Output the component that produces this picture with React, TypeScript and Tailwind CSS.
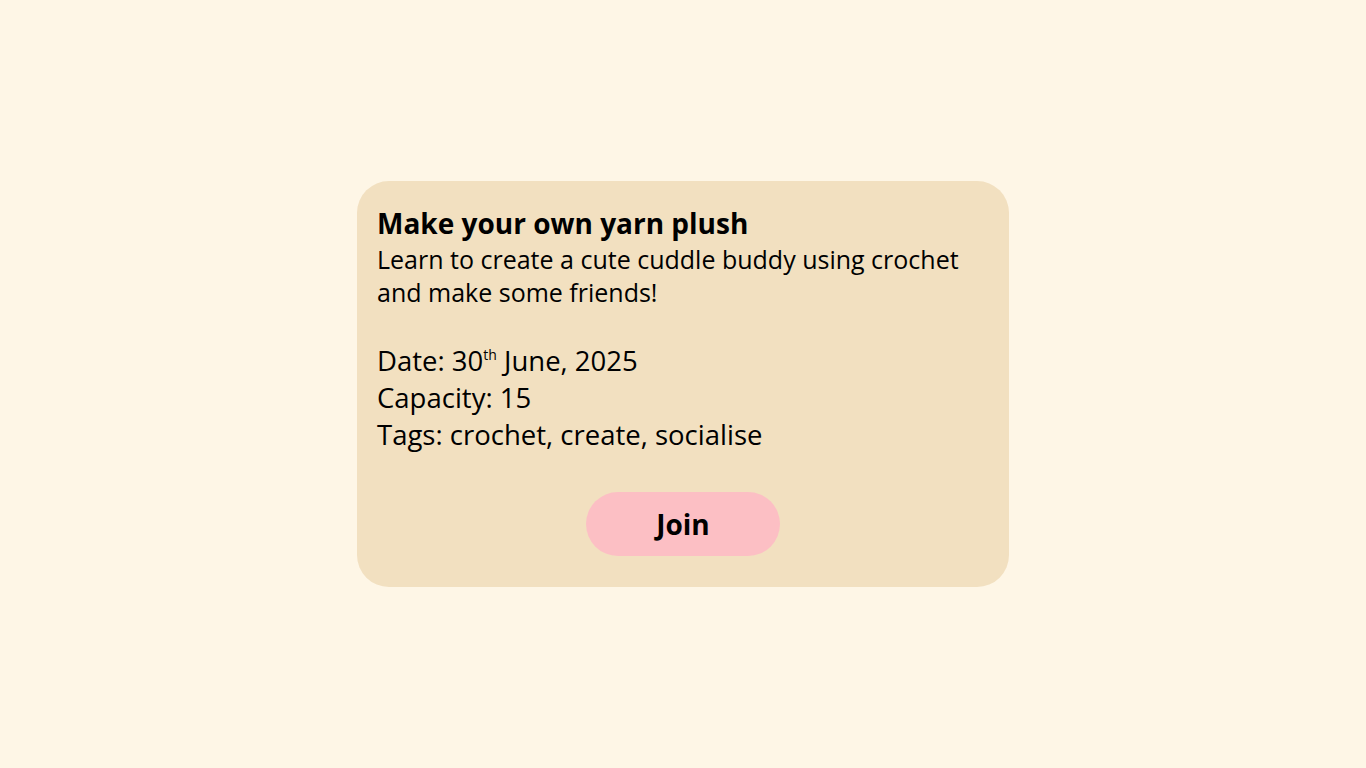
export default function App() {
  return (
    <div className="min-h-screen w-full bg-[#fef6e6] flex items-center justify-center" style={{ fontFamily: '"Open Sans", "Noto Sans", sans-serif' }}>
      <div className="w-[652px] h-[406px] bg-[#f2e0c0] rounded-[32px] px-5 pt-[24px] flex flex-col text-black">
        <h1 className="text-[28px] leading-[36px] font-bold">Make your own yarn plush</h1>
        <p className="text-[25px] leading-[33px] mt-[2px] max-w-[600px]">Learn to create a cute cuddle buddy using crochet and make some friends!</p>
        <div className="mt-[33px] text-[27.5px] leading-[37px]">
          <div>Date: 30<sup className="text-[14px] -top-[0.8em]">th</sup> June, 2025</div>
          <div>Capacity: 15</div>
          <div>Tags: crochet, create, socialise</div>
        </div>
        <div className="flex justify-center mt-[39px]">
          <button className="w-[194px] h-[64px] rounded-full bg-[#fcbfc4] text-[28px] font-bold">Join</button>
        </div>
      </div>
    </div>
  );
}
